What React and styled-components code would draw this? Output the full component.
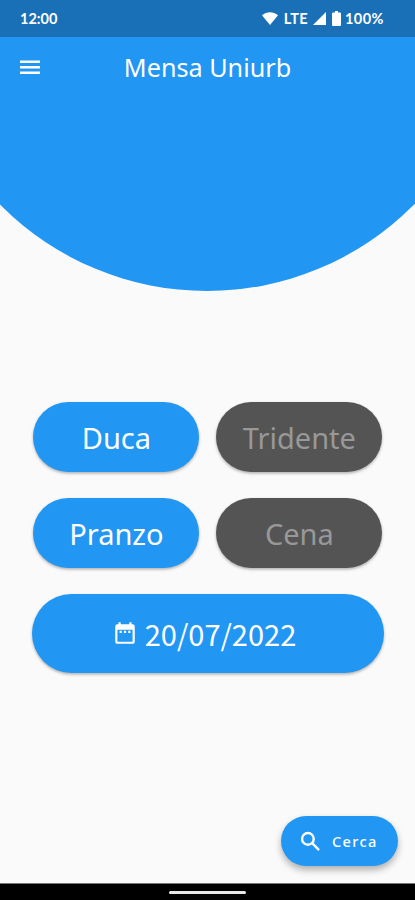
import styled, { createGlobalStyle } from 'styled-components';

const colors = {
    blue: '#2196f3',
    dark_blue: '#1a70b6',
    gray: '#545454',
    light_gray: '#989898',
    background: '#fafafa',
    white: '#ffffff'
};

const GlobalStyle = createGlobalStyle`
    * {
        box-sizing: border-box;
    }

    body {
        margin: 0;
        background: ${ colors.background };
        font-family: 'Noto Sans', sans-serif;
    }

    button {
        border: none;
        padding: 0;
        font-family: inherit;
        cursor: pointer;
    }
`;

const Screen = styled.div`
    display: flex;
    flex-direction: column;
    height: 900px;
    overflow: hidden;
    background: ${ colors.background };
`;

const Hero = styled.header`
    flex: none;
    height: 291px;
    background: ${ colors.blue };
    clip-path: circle(291px at 207px 0);
`;

const StatusBar = styled.div`
    display: flex;
    align-items: center;
    justify-content: space-between;
    height: 37px;
    padding: 0 31px 0 20px;
    background: ${ colors.dark_blue };
    color: ${ colors.white };
    font-family: Lato, sans-serif;
    font-size: 14.5px;
    font-weight: 700;
`;

const Clock = styled.span``;

const StatusIcons = styled.div`
    display: flex;
    align-items: center;

    svg {
        fill: ${ colors.white };
    }
`;

const Network = styled.span`
    margin: 0 5px 0 6px;
    letter-spacing: .3px;
`;

const BatteryIcon = styled.svg`
    margin-left: 6px;
`;

const Battery = styled.span`
    margin-left: 4px;
    letter-spacing: .5px;
`;

const AppBar = styled.div`
    display: grid;
    grid-template-columns: 84px 1fr 84px;
    align-items: center;
    height: 60px;
    color: ${ colors.white };
`;

const MenuButton = styled.button`
    display: flex;
    margin-left: 17px;
    width: 26px;
    background: none;
    color: inherit;
`;

const Title = styled.h1`
    margin: 0;
    font-size: 25.2px;
    font-weight: 400;
    text-align: center;
    white-space: nowrap;
`;

const Main = styled.main`
    flex: 1;
    display: flex;
    flex-direction: column;
    padding: 111px 31px 17px 32px;
`;

const Options = styled.div`
    display: grid;
    grid-template-columns: 166px 166px;
    gap: 26px 17px;
    margin-left: 1.4px;
`;

const Pill = styled.button`
    display: flex;
    align-items: center;
    justify-content: center;
    height: 70px;
    border-radius: 35px;
    background: ${ props => props.$active ? colors.blue : colors.gray };
    color: ${ props => props.$active ? colors.white : colors.light_gray };
    font-size: 29px;
    box-shadow: 0 1.5px 3px rgba(0, 0, 0, .3);
`;

const DateButton = styled(Pill)`
    flex: none;
    height: 79px;
    margin-top: 26px;
    padding: 0 8px 2px 0;
    border-radius: 40px;
    gap: 7px;
    font-family: 'Noto Sans CJK SC', sans-serif;
`;

const SearchButton = styled.button`
    display: flex;
    align-items: center;
    align-self: flex-end;
    flex: none;
    width: 117px;
    height: 50px;
    margin: auto -14px 0 0;
    padding-left: 17px;
    gap: 9px;
    border-radius: 25px;
    background: ${ colors.blue };
    color: ${ colors.white };
    font-size: 14.5px;
    font-weight: 500;
    letter-spacing: 1.4px;
    box-shadow: 0 4px 7px rgba(0, 0, 0, .3);
`;

const NavigationBar = styled.footer`
    display: flex;
    justify-content: center;
    flex: none;
    height: 17px;
    padding-top: 7px;
    border-top: 1px solid #777;
    background: #000;
`;

const Handle = styled.div`
    width: 77px;
    height: 3px;
    border-radius: 2px;
    background: #e8e8e8;
`;

function MenuIcon() {
    return (
        <svg width="26" height="26" viewBox="0 0 26 26" fill="currentColor">
            <path d="M3 6.5H23V9H3ZM3 12H23V14.5H3ZM3 17.5H23V20H3Z" />
        </svg>
    );
}

function CalendarIcon() {
    return (
        <svg width="26" height="26" viewBox="0 0 24 24" fill="currentColor">
            <path
                fillRule="evenodd"
                d="M6 2H8V4H16V2H18V4H19Q21 4 21 6V20Q21 22 19 22H5Q3 22 3 20V6Q3 4 5 4H6ZM5 9V20H19V9Z"
            />
            <path d="M7 10H9V12H7ZM11 10H13V12H11ZM15 10H17V12H15Z" />
        </svg>
    );
}

function SearchIcon() {
    return (
        <svg width="25" height="25" viewBox="0 0 24 24" fill="none" stroke="currentColor" strokeWidth="2.3">
            <circle cx="9.5" cy="9.5" r="5.6" />
            <path d="M13.4 13.4L20.2 20.2" />
        </svg>
    );
}

export default function App() {
    return (
        <>
            <GlobalStyle />
            <Screen>
                <Hero>
                    <StatusBar>
                        <Clock>12:00</Clock>
                        <StatusIcons>
                            <svg width="16" height="13" viewBox="0 0 16 13">
                                <path d="M0 3.2C4.6-.8 11.4-.8 16 3.2L8 13Z" />
                            </svg>
                            <Network>LTE</Network>
                            <svg width="13" height="13" viewBox="0 0 13 13">
                                <path d="M13 0V13H0Z" />
                            </svg>
                            <BatteryIcon width="9" height="15" viewBox="0 0 9 15">
                                <path d="M3 0H6V1.5H8Q9 1.5 9 2.5V14Q9 15 8 15H1Q0 15 0 14V2.5Q0 1.5 1 1.5H3Z" />
                            </BatteryIcon>
                            <Battery>100%</Battery>
                        </StatusIcons>
                    </StatusBar>

                    <AppBar>
                        <MenuButton aria-label="Menu">
                            <MenuIcon />
                        </MenuButton>
                        <Title>Mensa Uniurb</Title>
                    </AppBar>
                </Hero>

                <Main>
                    <Options>
                        <Pill $active>Duca</Pill>
                        <Pill>Tridente</Pill>
                        <Pill $active>Pranzo</Pill>
                        <Pill>Cena</Pill>
                    </Options>

                    <DateButton $active>
                        <CalendarIcon />
                        20/07/2022
                    </DateButton>

                    <SearchButton>
                        <SearchIcon />
                        Cerca
                    </SearchButton>
                </Main>

                <NavigationBar>
                    <Handle />
                </NavigationBar>
            </Screen>
        </>
    );
}
